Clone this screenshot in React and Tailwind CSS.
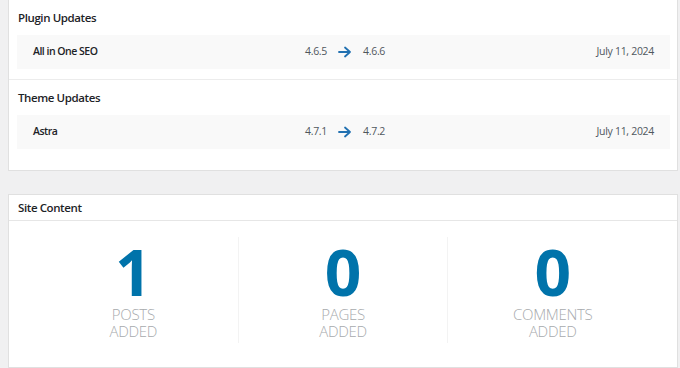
const font = { fontFamily: '"Open Sans", "Noto Sans", sans-serif' };

function ArrowRight() {
  return (
    <svg width="14" height="12" viewBox="0 0 14 12" fill="none" className="mx-[11px]">
      <path d="M1 6h11M7 1.5l5 4.5-5 4.5" stroke="#2271b1" strokeWidth="1.8" strokeLinecap="round" strokeLinejoin="round" />
    </svg>
  );
}

const plugins = [{ name: 'All in One SEO', from: '4.6.5', to: '4.6.6', date: 'July 11, 2024' }];
const themes = [{ name: 'Astra', from: '4.7.1', to: '4.7.2', date: 'July 11, 2024' }];

function UpdateRow({ item }) {
  return (
    <div className="flex items-center h-[34px] bg-[#f9f9f9] text-[10.5px] tracking-[-0.3px] text-[#50575e]">
      <div className="w-[288px] pl-4 font-semibold tracking-[-0.5px] text-[#1d2327]">{item.name}</div>
      <div className="flex items-center">
        <span>{item.from}</span>
        <ArrowRight />
        <span>{item.to}</span>
      </div>
      <div className="ml-auto pr-4">{item.date}</div>
    </div>
  );
}

function UpdateSection({ title, items, last }) {
  return (
    <div className={last ? 'pl-2 pr-[7px] pb-[21px]' : 'pl-2 pr-[7px] pb-[10px] border-b border-[#ececec]'}>
      <h3 className="pt-[10px] pb-[9px] pl-[1px] text-[11.5px] leading-4 tracking-[-0.4px] font-semibold text-[#1d2327]">{title}</h3>
      {items.map((it) => (
        <UpdateRow key={it.name} item={it} />
      ))}
    </div>
  );
}

function Stat({ value, label, divider }) {
  return (
    <div className={'flex-1 flex flex-col items-center pt-[3px] h-[106px] ' + (divider ? 'border-r border-[#f3f3f3]' : '')}>
      <div className="text-[64px] leading-[64px] font-bold text-[#0073aa]">{value}</div>
      <p className="mt-[2px] text-[15px] leading-[17px] tracking-[-0.3px] font-light text-[#a7aaad] text-center uppercase">
        {label[0]}
        <br />
        {label[1]}
      </p>
    </div>
  );
}

export default function App() {
  return (
    <div className="w-[680px] h-[368px] overflow-hidden bg-[#f0f0f1] pl-2 pr-[2px]" style={font}>
      <div className="bg-white border border-t-0 border-[#e0e0e0]">
        <UpdateSection title="Plugin Updates" items={plugins} />
        <UpdateSection title="Theme Updates" items={themes} last />
      </div>
      <div className="mt-[23px] bg-white border border-[#e0e0e0]">
        <div className="h-[26px] px-[9px] flex items-center border-b border-[#e6e6e6] text-[11.5px] tracking-[-0.4px] font-semibold text-[#1d2327]">
          Site Content
        </div>
        <div className="flex px-5 pt-4 pb-[24px]">
          <Stat value="1" label={['Posts', 'Added']} divider />
          <Stat value="0" label={['Pages', 'Added']} divider />
          <Stat value="0" label={['Comments', 'Added']} />
        </div>
      </div>
    </div>
  );
}
